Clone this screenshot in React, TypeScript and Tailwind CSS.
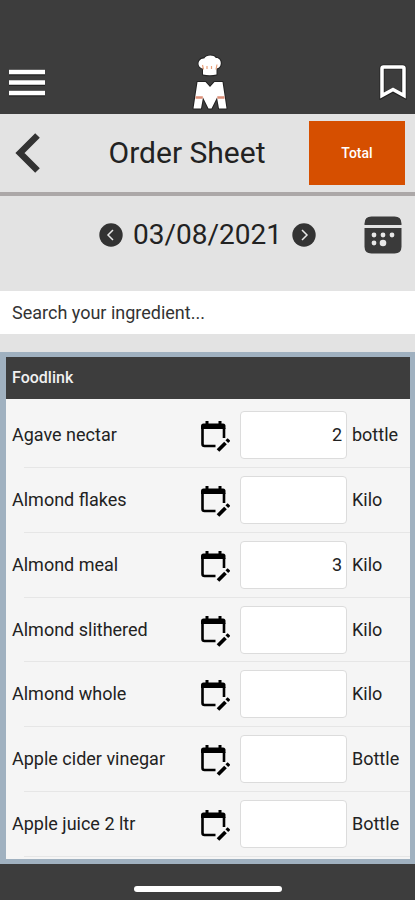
import { useState } from "react";

type Item = { name: string; qty: string; unit: string };

const initialItems: Item[] = [
  { name: "Agave nectar", qty: "2", unit: "bottle" },
  { name: "Almond flakes", qty: "", unit: "Kilo" },
  { name: "Almond meal", qty: "3", unit: "Kilo" },
  { name: "Almond slithered", qty: "", unit: "Kilo" },
  { name: "Almond whole", qty: "", unit: "Kilo" },
  { name: "Apple cider vinegar", qty: "", unit: "Bottle" },
  { name: "Apple juice 2 ltr", qty: "", unit: "Bottle" },
];

function ChefLogo() {
  return (
    <svg width="38" height="58" viewBox="0 0 38 58" aria-label="Chef M" role="img">
      <g fill="#fff" stroke="#222" strokeWidth="2" paintOrder="stroke" strokeLinejoin="round">
        <path d="M12 21.500V15.500C8 15 6.500 11 8.200 8C9.500 5.800 12 5.200 13.200 5.500C15 2 22.500 1.500 24.800 5C27.500 4.500 30 7 29.800 10.500C29.600 13.500 28 15 25.500 15.500V21.500C21.500 22.500 16 22.500 12 21.500Z" />
        <path d="M6.500 29H14.500L19 34L23.500 29H31.500L35.500 55.500H28L26 44.500L20.500 55.500H17.500L12 44.500L10 55.500H2.500Z" />
      </g>
      <path d="M11.500 12L12.500 16.500M16 13V16M20.500 13V16M26 11.500L25 16.500" stroke="#e9a07a" strokeWidth="1.200" fill="none" />
      <path d="M4.500 44.500H11.800M26.300 44.500H33.500" stroke="#dc8f78" strokeWidth="2.500" />
    </svg>
  );
}

function MenuIcon() {
  return (
    <svg width="36" height="28" viewBox="0 0 36 28" aria-hidden="true">
      <path d="M0 3.500H36M0 14H36M0 24.500H36" stroke="#222" strokeWidth="6" />
      <path d="M0 3H36M0 13.500H36M0 24H36" stroke="#fff" strokeWidth="4.500" />
    </svg>
  );
}

function BookmarkIcon() {
  return (
    <svg width="32" height="36" viewBox="-4 0 32 36" fill="none" aria-hidden="true">
      <path d="M3 32V4.500Q3 3 4.500 3H23.500Q25 3 25 4.500V32L14 26Z" stroke="#222" strokeWidth="5" />
      <path d="M3 31.500V4.500Q3 3 4.500 3H23.500Q25 3 25 4.500V31.500L14 25.500Z" stroke="#fff" strokeWidth="3.500" />
    </svg>
  );
}

function CalendarEditIcon() {
  return (
    <svg width="29" height="34" viewBox="0 -3 29 34" fill="none" stroke="#000" aria-hidden="true">
      <path d="M6 0V4M19 0V4" strokeWidth="3" />
      <path d="M0 8V5Q0 2.500 2.500 2.500H22Q24.500 2.500 24.500 5V8Z" fill="#000" stroke="none" />
      <path d="M23 7V17M1.500 7V23Q1.500 25 3.500 25H14.500" strokeWidth="2.600" />
      <path d="M17 29.500L24.500 22" strokeWidth="3.800" />
      <path d="M25.800 20.700L28 18.500" strokeWidth="3.800" />
    </svg>
  );
}

function CalendarIcon() {
  return (
    <svg width="38" height="38" viewBox="0 0 38 38" aria-hidden="true">
      <path d="M0.500 9V7.500Q0.500 0.500 7.500 0.500H30.500Q37.500 0.500 37.500 7.500V9Z" fill="#3a3a3a" />
      <path d="M0.500 12H37.500V30.500Q37.500 37.500 30.500 37.500H7.500Q0.500 37.500 0.500 30.500Z" fill="#3a3a3a" />
      <g fill="#e8e8e8">
        <circle cx="10" cy="19" r="2.400" />
        <circle cx="19" cy="19" r="2.400" />
        <circle cx="28" cy="19" r="2.400" />
        <circle cx="10" cy="27" r="2.400" />
        <circle cx="19" cy="27" r="3.300" />
      </g>
    </svg>
  );
}

function DayButton({ label, path }: { label: string; path: string }) {
  return (
    <button type="button" aria-label={label} className="shrink-0">
      <svg width="24" height="24" viewBox="0 0 24 24" fill="none" aria-hidden="true">
        <circle cx="12" cy="12" r="11.700" fill="#333" />
        <path d={path} stroke="#e8e8e8" strokeWidth="1.500" />
      </svg>
    </button>
  );
}

export default function App() {
  const [items, setItems] = useState(initialItems);
  const setQty = (index: number, qty: string) =>
    setItems(items.map((item, i) => (i === index ? { ...item, qty } : item)));

  return (
    <div className="flex min-h-screen flex-col bg-[#e3e3e3] font-[Roboto,sans-serif] text-lg text-[#222]">
      <header className="flex items-end justify-between bg-[#3d3d3d] pt-[53px] pr-2 pb-[3px] pl-[9px]">
        <button type="button" aria-label="Menu" className="mb-[14px]">
          <MenuIcon />
        </button>
        <ChefLogo />
        <button type="button" aria-label="Bookmarks" className="mb-[11px]">
          <BookmarkIcon />
        </button>
      </header>

      <div className="grid grid-cols-[51px_1fr_96px] items-center border-b-4 border-[#aca8a8] py-[7px] pr-[10px] pl-[14px]">
        <button type="button" aria-label="Back">
          <svg width="28" height="40" viewBox="0 0 28 40" fill="none" aria-hidden="true">
            <path d="M23.500 2.500L6 20L23.500 37.500" stroke="#333" strokeWidth="6.500" />
          </svg>
        </button>
        <h1 className="text-center text-3xl leading-9 whitespace-nowrap">Order Sheet</h1>
        <button type="button" className="h-16 bg-[#d64f00] text-sm font-medium text-white">
          Total
        </button>
      </div>

      <div className="grid grid-cols-[38px_1fr_38px] items-center px-[13px] pt-5 pb-[37px]">
        <span />
        <div className="flex items-center justify-center gap-[10px]">
          <DayButton label="Previous day" path="M14 7L9 12L14 17" />
          <time dateTime="2021-08-03" className="text-[28px] leading-9">
            03/08/2021
          </time>
          <DayButton label="Next day" path="M10 7L15 12L10 17" />
        </div>
        <button type="button" aria-label="Choose date">
          <CalendarIcon />
        </button>
      </div>

      <input
        type="search"
        aria-label="Search your ingredient"
        placeholder="Search your ingredient..."
        className="h-[43px] w-full bg-white px-3 outline-none placeholder:text-[#333]"
      />

      <main className="mt-[18px] flex grow flex-col bg-[#a0b1c0] pt-[5px] pr-[5px] pb-[5px] pl-[6px]">
        <h2 className="bg-[#3d3d3d] px-[6px] py-[9px] text-base font-medium text-[#f0f0f0]">Foodlink</h2>
        <ul className="flex grow flex-col bg-[#f5f5f5] pt-1 pb-[2px]">
          {items.map((item, i) => (
            <li key={item.name} className="flex grow flex-col">
              <div className="grid grow grid-cols-[1fr_39px_107px_63px] items-center pl-[6px]">
                <label htmlFor={`qty-${i}`} className="whitespace-nowrap">
                  {item.name}
                </label>
                <button type="button" aria-label={`Schedule ${item.name}`} className="justify-self-start">
                  <CalendarEditIcon />
                </button>
                <input
                  id={`qty-${i}`}
                  inputMode="numeric"
                  value={item.qty}
                  onChange={(e) => setQty(i, e.target.value)}
                  className="h-12 w-full rounded border border-[#dcdcdc] bg-white px-1 text-right outline-none"
                />
                <span className="pl-[5px]">{item.unit}</span>
              </div>
              <div className="ml-[18px] h-px bg-[#e6e6e6]" />
            </li>
          ))}
        </ul>
      </main>

      <footer className="flex justify-center bg-[#3d3d3d] pt-[22px] pb-2">
        <div className="h-[6px] w-[148px] rounded-full bg-white" />
      </footer>
    </div>
  );
}
